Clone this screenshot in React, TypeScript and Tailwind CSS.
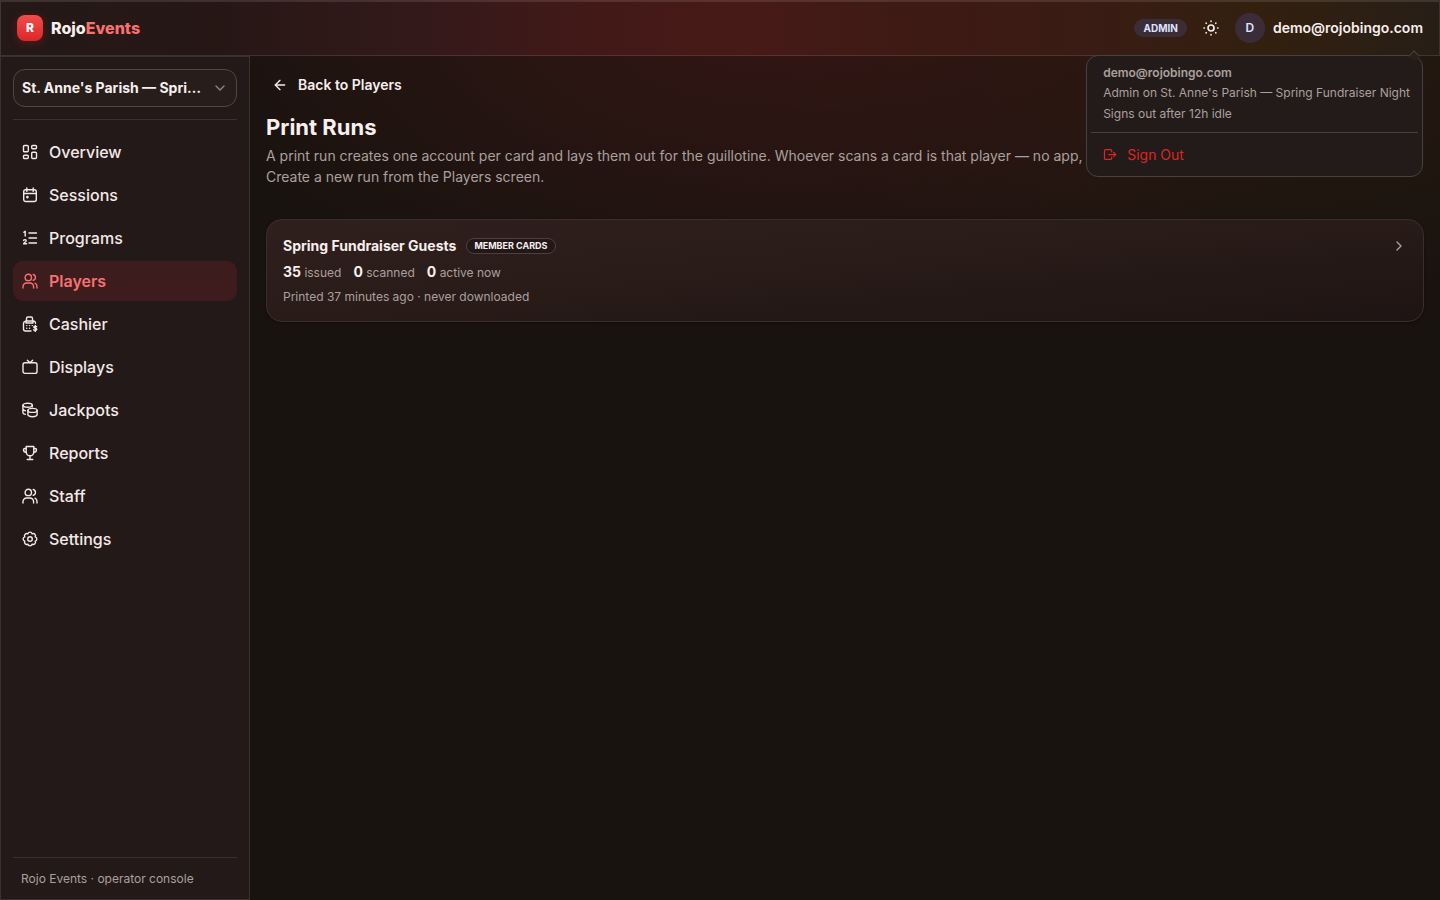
import type { ReactNode } from "react";
import { ArrowLeft, ChevronDown, ChevronRight } from "lucide-react";

// 16px line icons, drawn on a 16 unit grid
const icons: Record<string, ReactNode> = {
  overview: (
    <>
      <rect x="1.5" y="1.5" width="4.8" height="6.3" rx="1" />
      <rect x="9.7" y="1.5" width="4.8" height="3.2" rx="1" />
      <rect x="1.5" y="11.3" width="4.8" height="3.2" rx="1" />
      <rect x="9.7" y="8.2" width="4.8" height="6.3" rx="1" />
    </>
  ),
  sessions: (
    <>
      <rect x="1.7" y="2.7" width="12.6" height="11.8" rx="2" />
      <path d="M4.8 1v3.4M11.2 1v3.4M1.7 6.5h12.6" />
      <rect x="4.8" y="9.5" width="1.2" height="1.2" rx=".4" fill="currentColor" />
    </>
  ),
  programs: (
    <>
      <path d="M7 3h7.5M7 8h7.5M7 13h7.5" />
      <path d="M1.8 2.2 3.2 1.2V6M1.6 10.4c.6-1.2 2.8-1 2.6.4-.1 1-2 2-2.6 3h3" />
    </>
  ),
  users: (
    <>
      <circle cx="6.3" cy="4.4" r="3.2" />
      <path d="M1 15v-1.3a3.7 3.7 0 0 1 3.7-3.7h3.2a3.7 3.7 0 0 1 3.7 3.7V15M11.2 1.5a3 3 0 0 1 0 5.8M13 10.2a3.7 3.7 0 0 1 2 3.4V15" />
    </>
  ),
  cashier: (
    <>
      <path d="M4.5 4.8V2.4A1.4 1.4 0 0 1 5.9 1h3.2a1.4 1.4 0 0 1 1.4 1.4v2.4M4 5h7v2H4zM4 5 2.6 5.6A2 2 0 0 0 1.5 7.4V13a2 2 0 0 0 2 2H9M11 5a2.3 2.3 0 0 1 2.5 2.3" />
      <path d="M4.7 9.6h.1M7.5 9.6h.1M10.2 9.6h.1M4.7 12.2h.1M7.5 12.2h.1" />
      <path d="M14.7 10.8c-.5-.7-2.9-.8-2.9.5s3 .6 3 2-2.5 1.3-3.1.5M13.3 9.5v6" />
    </>
  ),
  displays: (
    <>
      <rect x="1" y="3.8" width="14" height="10.6" rx="2" />
      <path d="m5.3 1.2 2.7 2.6 2.7-2.6" />
    </>
  ),
  jackpots: (
    <>
      <ellipse cx="5.6" cy="3.2" rx="4.7" ry="2" />
      <path d="M.9 3.2v7.3c0 .9 1 1.6 2.5 1.9M.9 6.8c0 1 1 1.6 2.5 1.9M10.3 3.2v1.6" />
      <ellipse cx="10.5" cy="8.4" rx="4.6" ry="2" />
      <path d="M5.9 8.4v4.2c0 1.2 2 2.1 4.6 2.1s4.6-.9 4.6-2.1V8.4" />
    </>
  ),
  reports: (
    <>
      <path d="M4.2 1.5h7.6V7a3.8 3.8 0 0 1-7.6 0zM8 10.8v3.5M5.2 14.5h5.6" />
      <path d="M4.2 3.5H2.8c-.9 0-1.3.6-1.3 1.3 0 1.5 1 2.5 2.8 2.6M11.8 3.5h1.4c.9 0 1.3.6 1.3 1.3 0 1.5-1 2.5-2.8 2.6" />
    </>
  ),
  settings: (
    <>
      <path d="M13.17 5.86a2.2 2.2 0 0 1 0 4.28 2.2 2.2 0 0 1-3.03 3.03 2.2 2.2 0 0 1-4.28 0 2.2 2.2 0 0 1-3.03-3.03 2.2 2.2 0 0 1 0-4.28 2.2 2.2 0 0 1 3.03-3.03 2.2 2.2 0 0 1 4.28 0 2.2 2.2 0 0 1 3.03 3.03z" />
      <circle cx="8" cy="8" r="2.3" />
    </>
  ),
  sun: (
    <>
      <circle cx="8" cy="8" r="3" strokeWidth="1.7" />
      <path strokeWidth="1.6" d="M8 1v.4M8 14.6v.4M1 8h.4M14.6 8h.4M3.1 3.1l.2.2M12.700 12.700l.2.2M3.100 12.900l.2-.2M12.700 3.300l.2-.2" />
    </>
  ),
  signOut: (
    <path d="M10 4.5V3.4a1.5 1.5 0 0 0-1.5-1.5H3.2a1.5 1.5 0 0 0-1.5 1.5v8.2a1.5 1.5 0 0 0 1.5 1.5h5.3a1.5 1.5 0 0 0 1.5-1.5v-1.1M6.5 7.5h8M12.3 5.2l2.3 2.3-2.3 2.3" />
  ),
};

function Icon({ name, className = "size-4" }: { name: string; className?: string }) {
  return (
    <svg
      viewBox="0 0 16 16"
      className={`shrink-0 ${className}`}
      fill="none"
      stroke="currentColor"
      strokeWidth="1.4"
      strokeLinecap="round"
      strokeLinejoin="round"
      aria-hidden="true"
    >
      {icons[name]}
    </svg>
  );
}

const nav = [
  { label: "Overview", icon: "overview" },
  { label: "Sessions", icon: "sessions" },
  { label: "Programs", icon: "programs" },
  { label: "Players", icon: "users", active: true },
  { label: "Cashier", icon: "cashier" },
  { label: "Displays", icon: "displays" },
  { label: "Jackpots", icon: "jackpots" },
  { label: "Reports", icon: "reports" },
  { label: "Staff", icon: "users" },
  { label: "Settings", icon: "settings" },
];

const stats = [
  { value: 35, label: "issued" },
  { value: 0, label: "scanned" },
  { value: 0, label: "active now" },
];

function AccountMenu() {
  return (
    <div className="absolute top-full right-0 z-10 mt-3 rounded-xl border border-[#4b403e] bg-[#231b19] px-1 pb-1">
      <span className="absolute -top-1 right-1 size-2 rotate-45 border-t border-l border-[#4b403e] bg-[#2b1f17]" />
      <div className="relative pt-[9px] pr-2 pb-2 pl-3 text-xs leading-[21px] whitespace-nowrap text-[#aaa09d]">
        <p className="mb-px leading-4 font-semibold">demo@rojobingo.com</p>
        <p>Admin on St. Anne's Parish — Spring Fundraiser Night</p>
        <p>Signs out after 12h idle</p>
      </div>
      <div className="border-t border-[#4b403e] pt-[5px]">
        <button type="button" className="flex h-[34px] w-full items-center gap-2.5 px-3 text-sm text-[#dc2626]">
          <Icon name="signOut" className="size-3.5" />
          Sign Out
        </button>
      </div>
    </div>
  );
}

function Header() {
  return (
    <header className="flex h-14 items-center justify-between border border-[#ffffff1c] bg-[linear-gradient(90deg,#241917_0%,#261715_15%,#35191a_30%,#431917_42%,#461a17_52%,#3e1a14_64%,#391c14_76%,#33200f_87%,#271e16_100%)] px-4 shadow-[inset_0_1px_0_#ffffff1c]">
      <a href="#" className="flex items-center gap-2 text-base font-extrabold text-[#f7eeee]">
        <span className="flex size-[26px] items-center justify-center rounded-lg bg-linear-to-b from-[#f14b4b] to-[#dc2626] text-xs text-white shadow-[0_2px_8px_#dc262640]">
          R
        </span>
        <span>
          Rojo<span className="text-[#f87171]">Events</span>
        </span>
      </a>
      <div className="flex items-center gap-4">
        <span className="rounded-full bg-[#3b2d38] px-[9px] text-[10px] leading-[18px] font-bold text-[#dfe3ff]">ADMIN</span>
        <button type="button" aria-label="Toggle theme" className="text-[#f7eeee]">
          <Icon name="sun" />
        </button>
        <div className="relative">
          <button type="button" className="flex items-center gap-2 text-sm font-semibold text-[#f7eeee]">
            <span className="flex size-[30px] items-center justify-center rounded-full bg-[#3b2d38] text-xs text-[#dfe3ff]">D</span>
            demo@rojobingo.com
          </button>
          <AccountMenu />
        </div>
      </div>
    </header>
  );
}

function Sidebar() {
  return (
    <aside className="flex w-[250px] shrink-0 flex-col border border-[#ffffff1a] bg-[#231918] p-3">
      <button
        type="button"
        className="flex h-[38px] shrink-0 items-center justify-between gap-2 rounded-xl border border-[#524644] bg-[#271e1c] px-2 text-sm font-bold text-[#f7eeee]"
      >
        <span className="truncate">St. Anne's Parish — Spring Fundraiser Night</span>
        <ChevronDown className="size-4 shrink-0 text-[#8f8582]" strokeWidth={2} />
      </button>
      <nav className="mt-3 flex flex-col gap-[3px] border-t border-[#3b302e] pt-3">
        {nav.map((item) => (
          <a
            key={item.label}
            href="#"
            aria-current={item.active ? "page" : undefined}
            className={
              item.active
                ? "flex h-10 items-center gap-[11px] rounded-[10px] bg-[#3c1c1d] px-[9px] text-base font-semibold text-[#f87171]"
                : "flex h-10 items-center gap-[11px] rounded-[10px] px-[9px] text-base font-medium text-[#f3e9e8]"
            }
          >
            <Icon name={item.icon} />
            {item.label}
          </a>
        ))}
      </nav>
      <p className="mt-auto border-t border-[#3b302e] px-2 pt-3 text-xs leading-[17px] text-[#aaa09d]">Rojo Events · operator console</p>
    </aside>
  );
}

export default function App() {
  return (
    <div className="flex min-h-screen flex-col bg-[#19130f] font-['Inter',sans-serif] text-[#f7eeee]">
      <Header />
      <div className="flex flex-1">
        <Sidebar />
        <main className="min-w-0 flex-1 bg-[radial-gradient(ellipse_620px_300px_at_45%_-40px,#341614_0%,#34161400_100%),radial-gradient(ellipse_500px_280px_at_85%_-30px,#281a10_0%,#281a1000_100%)] px-4 pt-[11px]">
          <a href="#" className="inline-flex h-9 items-center gap-2.5 px-1.5 text-sm font-semibold">
            <ArrowLeft className="size-4" />
            Back to Players
          </a>
          <h1 className="mt-2 text-[22px] leading-8 font-bold">Print Runs</h1>
          <p className="mt-0.5 text-sm leading-[21px] text-[#aaa09d]">
            A print run creates one account per card and lays them out for the guillotine. Whoever scans a card is that player — no app, no sign-up, no password.
            <br />
            Create a new run from the Players screen.
          </p>
          <a
            href="#"
            className="mt-8 flex items-start justify-between rounded-2xl border border-[#3a2e2b] bg-linear-to-br from-[#30201d] via-[#281b18] to-[#1e1413] p-4 shadow-[0_1px_3px_#00000060]"
          >
            <div>
              <div className="flex h-5 items-center gap-2.5">
                <h2 className="text-sm font-bold">Spring Fundraiser Guests</h2>
                <span className="rounded-full border border-[#4b403e] bg-[#211817] px-[7px] text-[9px] leading-[14px] font-bold">MEMBER CARDS</span>
              </div>
              <div className="mt-1.5 flex h-5 gap-3 text-xs leading-5 text-[#aaa09d]">
                {stats.map((stat) => (
                  <span key={stat.label}>
                    <b className="text-sm leading-5 font-bold text-[#f7eeee]">{stat.value}</b> {stat.label}
                  </span>
                ))}
              </div>
              <p className="mt-[7px] text-xs leading-4 text-[#aaa09d]">Printed 37 minutes ago · never downloaded</p>
            </div>
            <ChevronRight className="mt-0.5 size-4 text-[#aaa09d]" />
          </a>
        </main>
      </div>
    </div>
  );
}
